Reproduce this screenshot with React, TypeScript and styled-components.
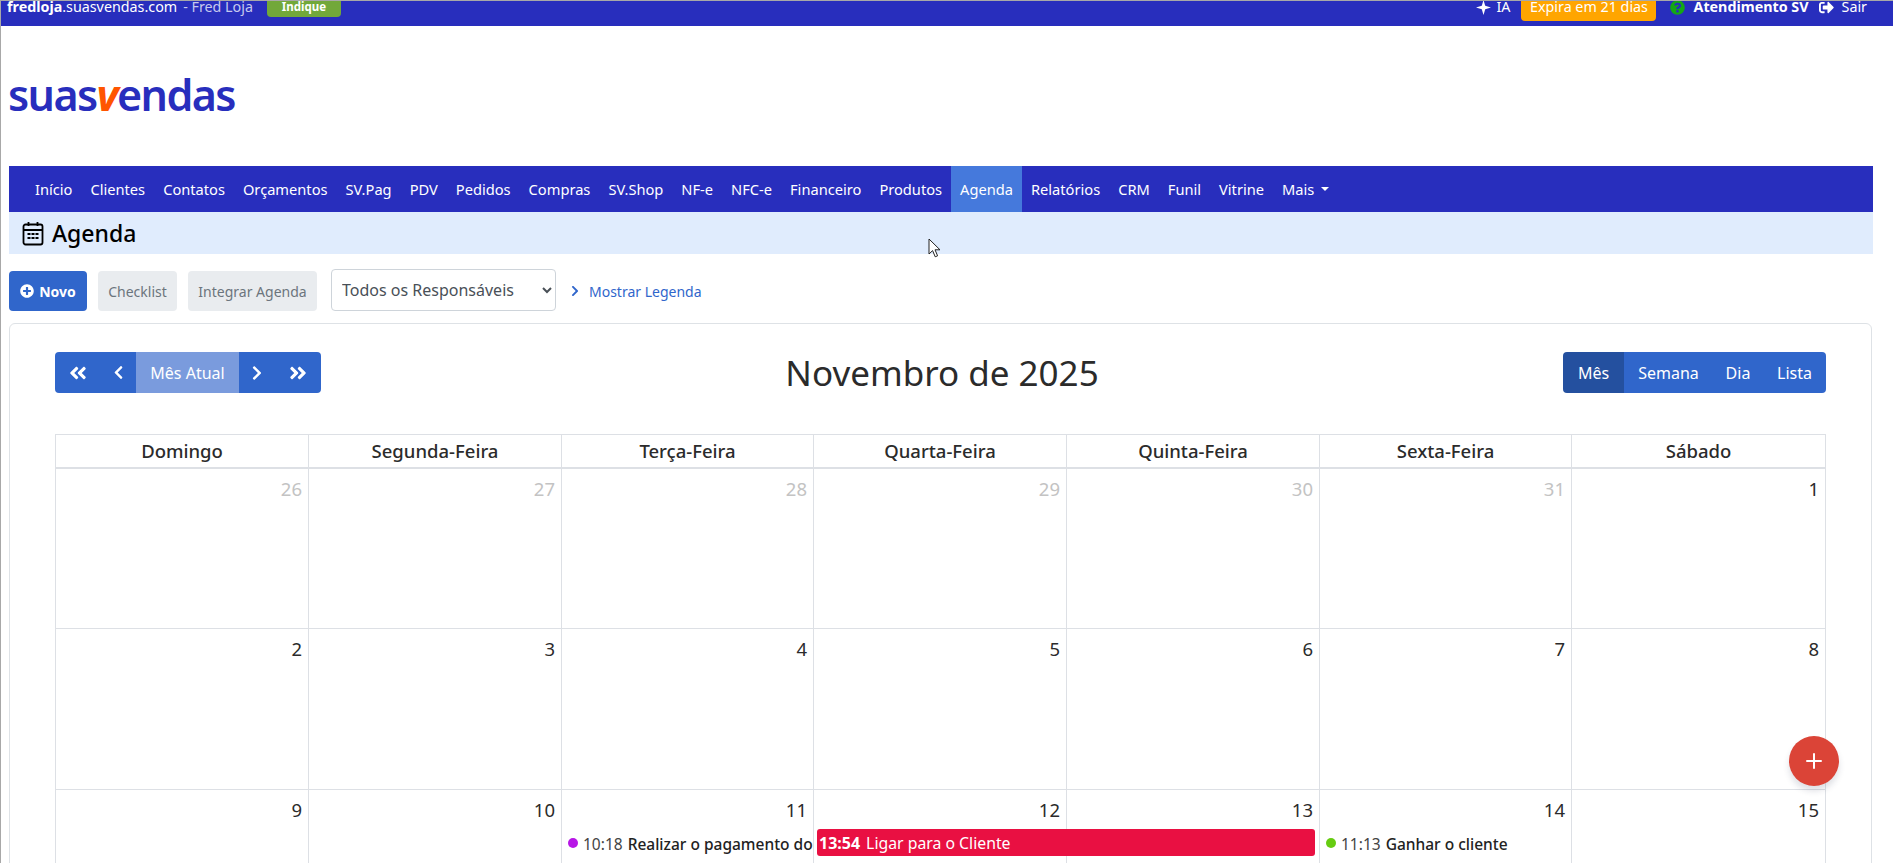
import React from "react";
import styled, { createGlobalStyle } from "styled-components";
import { FaAngleDoubleLeft, FaAngleDoubleRight, FaChevronLeft, FaChevronRight, FaPlusCircle, FaQuestionCircle, FaSignOutAlt } from "react-icons/fa";
import { FiPlus } from "react-icons/fi";

const GlobalStyle = createGlobalStyle`
    html, body {
        margin: 0;
        padding: 0;
        height: 863px;
        overflow: hidden;
        background: #ffffff;
    }
    body {
        font-family: "Noto Sans", "Open Sans", sans-serif;
        color: #212529;
    }
`;

const Page = styled.div`
    position: relative;
    height: 863px;
    overflow: hidden;
    border-top: 1px solid #a8a8a8;
    border-left: 1px solid #a8a8a8;
    box-sizing: border-box;
`;

const TopBar = styled.div`
    height: 25px;
    background: #282ebd;
    display: flex;
    justify-content: space-between;
    align-items: flex-start;
    padding: 0 26px 0 6px;
    overflow: hidden;
    color: #fff;
    font-size: 14.3px;
`;

const TopSide = styled.div`
    display: flex;
    align-items: flex-start;
    margin-top: -4px;
    line-height: 20px;
`;

const Domain = styled.span`
    b { font-weight: 700; }
`;

const UserName = styled.span`
    color: #c5c8ee;
    margin-left: 6px;
`;

const Indique = styled.span`
    background: #72a83a;
    border-radius: 0 0 4px 4px;
    width: 74px;
    height: 20px;
    margin-left: 14px;
    font-size: 11.5px;
    font-weight: 700;
    text-align: center;
    line-height: 19px;
`;

const TopItem = styled.span<{ $bold?: boolean; $gap: number; $iconGap?: number }>`
    display: flex;
    align-items: center;
    gap: ${(p) => p.$iconGap ?? 8}px;
    height: 20px;
    margin-left: ${(p) => p.$gap}px;
    font-weight: ${(p) => (p.$bold ? 700 : 400)};
`;

const Expira = styled.span`
    background: #ffa500;
    border-radius: 0 0 4px 4px;
    width: 135px;
    height: 24px;
    margin-left: 11px;
    text-align: center;
    line-height: 20px;
`;

const LogoWrap = styled.div`
    height: 140px;
    padding: 47px 0 0 7px;
    box-sizing: border-box;
`;

const Logo = styled.div`
    font-family: "Noto Sans", sans-serif;
    font-size: 43px;
    font-weight: 600;
    line-height: 44px;
    letter-spacing: -1.6px;
    color: #282ebd;
    span {
        color: #ff5500;
        font-weight: 700;
        font-style: italic;
    }
`;

const Nav = styled.nav`
    margin: 0 20px 0 8px;
    height: 46px;
    background: #282ebd;
    display: flex;
    padding-left: 17px;
`;

const NavItem = styled.a<{ $active?: boolean }>`
    display: flex;
    align-items: center;
    gap: 7px;
    padding: 0 9px;
    font-size: 14.65px;
    color: #fff;
    background: ${(p) => (p.$active ? "#4579dc" : "transparent")};
`;

const Caret = styled.span`
    width: 0;
    height: 0;
    border-top: 4px solid #fff;
    border-left: 4px solid transparent;
    border-right: 4px solid transparent;
`;

const TitleBar = styled.div`
    margin: 0 20px 0 8px;
    height: 42px;
    background: #e0ecfd;
    display: flex;
    align-items: center;
    gap: 8px;
    padding-left: 13px;
`;

const Title = styled.h1`
    margin: 0;
    font-size: 23px;
    font-weight: 500;
    color: #000;
`;

const Actions = styled.div`
    display: flex;
    align-items: center;
    margin: 15px 0 0 8px;
    height: 44px;
`;

const Button = styled.span<{ $primary?: boolean; $w: number }>`
    display: inline-flex;
    align-items: center;
    justify-content: center;
    gap: 5px;
    box-sizing: border-box;
    width: ${(p) => p.$w}px;
    height: 40px;
    margin-right: 11px;
    border-radius: 4px;
    font-size: 14px;
    font-weight: ${(p) => (p.$primary ? 700 : 400)};
    color: ${(p) => (p.$primary ? "#fff" : "#6c757d")};
    background: ${(p) => (p.$primary ? "#3066cb" : "#e9ecef")};
`;

const Select = styled.select`
    box-sizing: border-box;
    width: 225px;
    height: 42px;
    margin: -2px 0 0 3px;
    padding: 0 6px;
    background: #fff;
    border: 1px solid #ced4da;
    border-radius: 4px;
    font-family: inherit;
    font-size: 16px;
    color: #495057;
`;

const LegendLink = styled.a`
    display: flex;
    align-items: center;
    gap: 8px;
    margin-left: 13px;
    font-size: 14px;
    color: #3066cb;
`;

const Card = styled.div`
    margin: 10px 21px 0 8px;
    padding: 28px 45px 0 45px;
    height: 600px;
    border: 1px solid #dee2e6;
    border-radius: 6px;
`;

const Toolbar = styled.div`
    display: flex;
    justify-content: space-between;
    align-items: center;
    height: 41px;
    margin-bottom: 41px;
`;

const BtnGroup = styled.div`
    display: flex;
    height: 41px;
    border-radius: 4px;
    overflow: hidden;
`;

const CalButton = styled.span<{ $w: number; $active?: boolean; $disabled?: boolean }>`
    display: flex;
    align-items: center;
    justify-content: center;
    width: ${(p) => p.$w}px;
    font-size: 16px;
    color: #fff;
    background: ${(p) => (p.$active ? "#24509f" : p.$disabled ? "#7a9bdd" : "#3066cb")};
`;

const MonthTitle = styled.h2`
    margin: 0;
    font-size: 35px;
    font-weight: 400;
    color: #2b2b2b;
`;

const Grid = styled.div`
    display: grid;
    grid-template-columns: 253px 253px 252px 253px 253px 252px 254px;
    border-top: 1px solid #dde0e5;
    border-left: 1px solid #dde0e5;
    position: relative;
`;

const HeadCell = styled.div`
    height: 32px;
    border-right: 1px solid #dde0e5;
    border-bottom: 2px solid #dde0e5;
    text-align: center;
    font-size: 18.5px;
    font-weight: 500;
    line-height: 32px;
    color: #2b2b2b;
`;

const DayCell = styled.div`
    height: 160px;
    box-sizing: content-box;
    position: relative;
    border-right: 1px solid #dde0e5;
    border-bottom: 1px solid #dde0e5;
`;

const FirstRowCell = styled(DayCell)`
    height: 159px;
`;

const DayNum = styled.div<{ $muted?: boolean }>`
    text-align: right;
    padding: 6px 6px 0 0;
    font-size: 18.5px;
    line-height: 28px;
    color: ${(p) => (p.$muted ? "#c3c3c3" : "#2b2b2b")};
`;

const DotEvent = styled.div`
    display: flex;
    align-items: center;
    white-space: nowrap;
    overflow: hidden;
    margin: 7px 0 0 6px;
    font-size: 15.5px;
    line-height: 26px;
    color: #444;
    b {
        font-weight: 500;
        color: #222;
        margin-left: 5px;
    }
`;

const Dot = styled.i<{ $color: string }>`
    flex: none;
    width: 10px;
    height: 10px;
    border-radius: 50%;
    margin: -2px 5px 0 0;
    background: ${(p) => p.$color};
`;

const SpanEvent = styled.div`
    position: absolute;
    top: 39px;
    left: 3px;
    width: 498px;
    height: 27px;
    z-index: 1;
    display: flex;
    align-items: center;
    gap: 6px;
    padding-left: 2px;
    box-sizing: border-box;
    border-radius: 3px;
    background: #e91042;
    color: #fff;
    font-size: 15.8px;
    b { font-weight: 700; font-size: 16px; }
`;

const Fab = styled.div`
    position: absolute;
    left: 1788px;
    top: 735px;
    width: 50px;
    height: 50px;
    border-radius: 50%;
    background: #db4437;
    box-shadow: 0 5px 6px rgba(40, 50, 80, 0.15);
    display: flex;
    align-items: center;
    justify-content: center;
    color: #fff;
    z-index: 3;
`;

const Pointer = styled.svg`
    position: absolute;
    left: 927px;
    top: 237px;
    z-index: 4;
`;

const navItems = ["Início", "Clientes", "Contatos", "Orçamentos", "SV.Pag", "PDV", "Pedidos", "Compras", "SV.Shop", "NF-e", "NFC-e", "Financeiro", "Produtos", "Agenda", "Relatórios", "CRM", "Funil", "Vitrine"];
const weekDays = ["Domingo", "Segunda-Feira", "Terça-Feira", "Quarta-Feira", "Quinta-Feira", "Sexta-Feira", "Sábado"];

const CalendarIcon = () => (
    <svg width="22" height="25" viewBox="0 0 21 25" fill="none" stroke="#000" strokeWidth="1.8">
        <rect x="1" y="3.5" width="19" height="20" rx="2" />
        <path d="M1 9h19M6 1v4M15 1v4" />
        <path d="M5 12h3v2H5zM9 12h3v2H9zM13 12h3v2h-3zM5 16h3v2H5zM9 16h3v2H9zM13 16h3v2h-3z" fill="#000" stroke="none" />
    </svg>
);

const App: React.FC = () => {
    const prevDays = [26, 27, 28, 29, 30, 31];
    return (
        <Page>
            <GlobalStyle />
            <TopBar>
                <TopSide>
                    <Domain><b>fredloja</b>.suasvendas.com</Domain>
                    <UserName>- Fred Loja</UserName>
                    <Indique>Indique</Indique>
                </TopSide>
                <TopSide>
                    <TopItem $gap={0} $iconGap={6}>
                        <svg width="15" height="15" viewBox="0 0 14 14" fill="#fff"><path d="M7 0l1.6 5.4L14 7l-5.4 1.6L7 14 5.4 8.6 0 7l5.4-1.6z" /></svg>
                        IA
                    </TopItem>
                    <Expira>Expira em 21 dias</Expira>
                    <TopItem $gap={14} $bold>
                        <FaQuestionCircle size={15} color="#14a814" />
                        Atendimento SV
                    </TopItem>
                    <TopItem $gap={10}>
                        <FaSignOutAlt size={15} />
                        Sair
                    </TopItem>
                </TopSide>
            </TopBar>
            <LogoWrap>
                <Logo>suas<span>v</span>endas</Logo>
            </LogoWrap>
            <Nav>
                {navItems.map((n) => (
                    <NavItem key={n} $active={n === "Agenda"}>{n}</NavItem>
                ))}
                <NavItem>Mais <Caret /></NavItem>
            </Nav>
            <TitleBar>
                <CalendarIcon />
                <Title>Agenda</Title>
            </TitleBar>
            <Actions>
                <Button $primary $w={78}><FaPlusCircle size={14} />Novo</Button>
                <Button $w={79}>Checklist</Button>
                <Button $w={129}>Integrar Agenda</Button>
                <Select defaultValue="todos">
                    <option value="todos">Todos os Responsáveis</option>
                </Select>
                <LegendLink><FaChevronRight size={12} />Mostrar Legenda</LegendLink>
            </Actions>
            <Card>
                <Toolbar>
                    <BtnGroup>
                        <CalButton $w={46}><FaAngleDoubleLeft size={20} /></CalButton>
                        <CalButton $w={35}><FaChevronLeft size={15} /></CalButton>
                        <CalButton $w={103} $disabled>Mês Atual</CalButton>
                        <CalButton $w={35}><FaChevronRight size={16} /></CalButton>
                        <CalButton $w={47}><FaAngleDoubleRight size={20} /></CalButton>
                    </BtnGroup>
                    <MonthTitle>Novembro de 2025</MonthTitle>
                    <BtnGroup>
                        <CalButton $w={61} $active>Mês</CalButton>
                        <CalButton $w={89}>Semana</CalButton>
                        <CalButton $w={50}>Dia</CalButton>
                        <CalButton $w={63}>Lista</CalButton>
                    </BtnGroup>
                </Toolbar>
                <Grid>
                    {weekDays.map((d) => <HeadCell key={d}>{d}</HeadCell>)}
                    {prevDays.map((d) => (
                        <FirstRowCell key={d}><DayNum $muted>{d}</DayNum></FirstRowCell>
                    ))}
                    <FirstRowCell><DayNum>1</DayNum></FirstRowCell>
                    {[2, 3, 4, 5, 6, 7, 8, 9, 10].map((d) => (
                        <DayCell key={d}><DayNum>{d}</DayNum></DayCell>
                    ))}
                    <DayCell>
                        <DayNum>11</DayNum>
                        <DotEvent><Dot $color="#b716e6" />10:18<b>Realizar o pagamento do fornecedor</b></DotEvent>
                    </DayCell>
                    <DayCell>
                        <DayNum>12</DayNum>
                        <SpanEvent><b>13:54</b>Ligar para o Cliente</SpanEvent>
                    </DayCell>
                    <DayCell><DayNum>13</DayNum></DayCell>
                    <DayCell>
                        <DayNum>14</DayNum>
                        <DotEvent><Dot $color="#66cc11" />11:13<b>Ganhar o cliente</b></DotEvent>
                    </DayCell>
                    <DayCell><DayNum>15</DayNum></DayCell>
                </Grid>
            </Card>
            <Fab><FiPlus size={24} /></Fab>
            <Pointer width="14" height="21" viewBox="0 0 14 21">
                <path d="M1 1v15l3.6-3.4 2.6 6.2 2.4-1-2.6-6h5z" fill="#fff" stroke="#222" strokeWidth="1" />
            </Pointer>
        </Page>
    );
};

export default App;
